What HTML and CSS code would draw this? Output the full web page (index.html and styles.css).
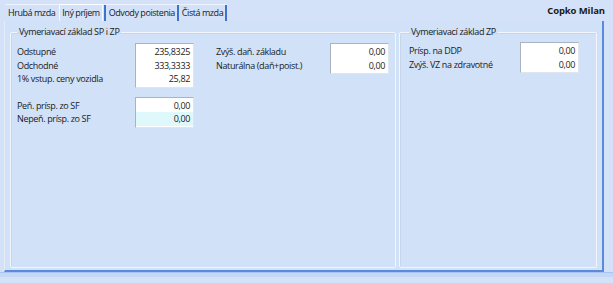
FILE: index.html
```html
<!DOCTYPE html>
<html>
<head>
<meta charset="utf-8">
<link rel="stylesheet" href="styles.css">
</head>
<body>
<div class="app">
  <div class="topbar">
    <div class="tabs">
      <div class="tab first">Hrubá mzda</div>
      <div class="tab active">Iný príjem</div>
      <div class="tab sep">Odvody poistenia</div>
      <div class="tab sep last">Čistá mzda</div>
    </div>
    <div class="name">Copko Milan</div>
  </div>
  <div class="panel">
    <fieldset class="group g1">
      <legend>Vymeriavací základ SP i ZP</legend>
      <div class="cols">
        <div class="col">
          <div class="block">
            <div class="labels">
              <div>Odstupné</div>
              <div>Odchodné</div>
              <div>1% vstup. ceny vozidla</div>
            </div>
            <div class="box">
              <div class="val">235,8325</div>
              <div class="val">333,3333</div>
              <div class="val">25,82</div>
            </div>
          </div>
          <div class="block">
            <div class="labels">
              <div>Peň. prísp. zo SF</div>
              <div>Nepeň. prísp. zo SF</div>
            </div>
            <div class="box">
              <div class="val">0,00</div>
              <div class="val cyan">0,00</div>
            </div>
          </div>
        </div>
        <div class="col c2">
          <div class="block">
            <div class="labels l2">
              <div>Zvýš. daň. základu</div>
              <div>Naturálna (daň+poist.)</div>
            </div>
            <div class="box">
              <div class="val">0,00</div>
              <div class="val">0,00</div>
            </div>
          </div>
        </div>
      </div>
    </fieldset>
    <fieldset class="group g2">
      <legend>Vymeriavací základ ZP</legend>
      <div class="block">
        <div class="labels l3">
          <div>Prísp. na DDP</div>
          <div>Zvýš. VZ na zdravotné</div>
        </div>
        <div class="box">
          <div class="val">0,00</div>
          <div class="val">0,00</div>
        </div>
      </div>
    </fieldset>
  </div>
  <div class="bottom"></div>
</div>
</body>
</html>
```
FILE: styles.css
```css
html, body {
  margin: 0;
  padding: 0;
  background: #d3e2f8;
}
body {
  font-family: "Open Sans", "Noto Sans", sans-serif;
  font-size: 9px;
  letter-spacing: -0.35px;
  color: #1a1a1a;
}
.app {
  width: 613px;
  height: 283px;
  padding-top: 5px;
  box-sizing: border-box;
}
.topbar {
  display: flex;
  justify-content: space-between;
  align-items: flex-end;
  padding-left: 5px;
  height: 16px;
}
.tabs {
  display: flex;
  height: 16px;
  border-top: 1px solid #eef3fb;
  letter-spacing: -0.45px;
}
.tab {
  padding: 0 2px 0 3px;
  line-height: 15px;
}
.tab.first {
  padding-right: 4px;
}
.tab.active {
  border-left: 1px solid #f6f9ff;
  border-right: 1px solid #f6f9ff;
  border-top: 1px solid #ffffff;
  margin-top: -1px;
  padding: 0 2px 1px 2px;
  margin-right: 1px;
  background: #d3e2f8;
}
.tab.sep {
  border-left: 2px solid #3b74cc;
}
.tab.last {
  border-right: 2px solid #3b74cc;
}
.name {
  font-weight: bold;
  font-size: 9.5px;
  letter-spacing: -0.1px;
  padding-right: 8px;
  line-height: 14px;
  margin-bottom: 3px;
}
.panel {
  margin-left: 4px;
  width: 600px;
  height: 251px;
  box-sizing: border-box;
  border-right: 2px solid #5a8ad8;
  border-bottom: 2px solid #5a8ad8;
  border-left: 1px solid #e4ecf8;
  display: flex;
  gap: 3px;
  padding: 5px 5px 2px 5px;
  background: #d1e1f8;
}
.bottom {
  height: 4px;
  background: #c3d8f7;
  border-top: 1px solid #a9c4ef;
}
.group {
  margin: 0;
  padding: 0 0 0 6px;
  border: 1px solid #f2f6fc;
  box-shadow: inset 1px 1px 0 #c9d6ea;
  border-radius: 2px;
  min-width: 0;
}
.group legend {
  padding: 0 2px;
  margin-left: 0;
  line-height: 12px;
}
.g1 {
  width: 386px;
  box-sizing: border-box;
}
.g2 {
  flex: 1;
  padding-left: 9px;
}
.cols {
  display: flex;
  padding-top: 3px;
}
.col {
  display: flex;
  flex-direction: column;
  gap: 7px;
}
.c2 {
  margin-left: 22px;
}
.block {
  display: flex;
  padding-top: 2px;
}
.g2 .block {
  padding-top: 4px;
}
.labels {
  width: 118px;
  padding-top: 2px;
}
.labels div {
  height: 13.5px;
  line-height: 13.5px;
}
.labels.l2 {
  width: 114px;
}
.labels.l3 {
  width: 111px;
}
.box {
  width: 59px;
  box-sizing: border-box;
  border: 1px solid #a9b3c2;
  border-right-color: #dfe5ee;
  border-bottom-color: #dfe5ee;
  background: #fff;
  padding: 1px 0;
}
.val {
  text-align: right;
  padding-right: 3px;
  height: 13.5px;
  line-height: 13.5px;
}
.val.cyan {
  background: #def8fc;
}
```
